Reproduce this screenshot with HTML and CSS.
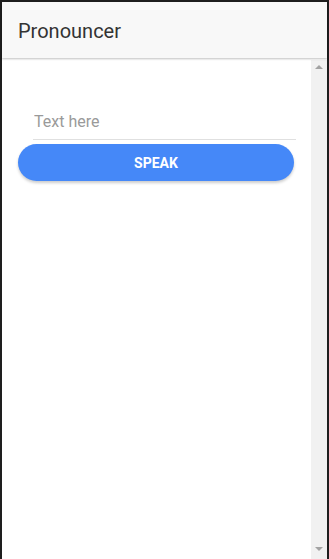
FILE: index.html
```html
<!DOCTYPE html>
<html lang="en">
<head>
  <meta charset="UTF-8">
  <meta name="viewport" content="width=device-width, initial-scale=1.0">
  <title>Pronouncer</title>
  <link rel="stylesheet" href="styles.css">
</head>
<body>
  <div class="frame">
    <!-- Top bar -->
    <div class="toolbar">
      <h1>Pronouncer</h1>
    </div>

    <div class="body-row">
      <div class="content">
        <input type="text" class="text-input" placeholder="Text here">
        <button class="speak-btn">SPEAK</button>
      </div>

      <!-- fake scrollbar -->
      <div class="scrollbar">
        <span class="arrow up"></span>
        <span class="arrow down"></span>
      </div>
    </div>
  </div>
</body>
</html>
```

FILE: styles.css
```css
html, body {
  height: 100%;
}

body {
  margin: 0;
  background-color: #1e1e1e;
  font-family: Roboto, "Noto Sans", Arial, sans-serif;
}

.frame {
  margin: 2px 2px 0 2px;
  height: calc(100% - 2px);
  background-color: #fff;
  display: flex;
  flex-direction: column;
}

.toolbar {
  height: 56px;
  background-color: #f8f8f8;
  display: flex;
  align-items: center;
  padding-left: 16px;
  box-shadow: 0 1px 2px rgba(0, 0, 0, 0.25);
  position: relative;
  z-index: 1;
}

.toolbar h1 {
  margin: 0;
  font-size: 20px;
  font-weight: 400;
  color: #333;
  padding-top: 1px;
}

.body-row {
  flex: 1;
  display: flex;
  margin-top: 2px;
}

.content {
  flex: 1;
  padding: 43px 17px 0 16px;
  display: flex;
  flex-direction: column;
}

.text-input {
  margin: 0 -2px 0 15px;
  border: none;
  border-bottom: 1px solid #e0e0e0;
  padding: 9px 1px 8px 1px;
  font-family: Roboto, Arial, sans-serif;
  font-size: 16px;
  color: #333;
  outline: none;
  background: transparent;
}

.text-input::placeholder {
  color: #9a9a9a;
}

.speak-btn {
  margin-top: 4px;
  height: 37px;
  border: none;
  border-radius: 19px;
  background-color: #4588f8;
  color: #fff;
  font-family: Roboto, Arial, sans-serif;
  font-weight: 700;
  font-size: 14px;
  box-shadow: 0 2px 3px rgba(0, 0, 0, 0.2);
  cursor: pointer;
}

.scrollbar {
  width: 16px;
  background-color: #f1f1f1;
  display: flex;
  flex-direction: column;
  justify-content: space-between;
  align-items: center;
  padding: 5px 0 8px 0;
}

.arrow {
  width: 0;
  height: 0;
  border-left: 4px solid transparent;
  border-right: 4px solid transparent;
}

.arrow.up {
  border-bottom: 4px solid #a3a3a3;
}

.arrow.down {
  border-top: 4px solid #a3a3a3;
}
```
